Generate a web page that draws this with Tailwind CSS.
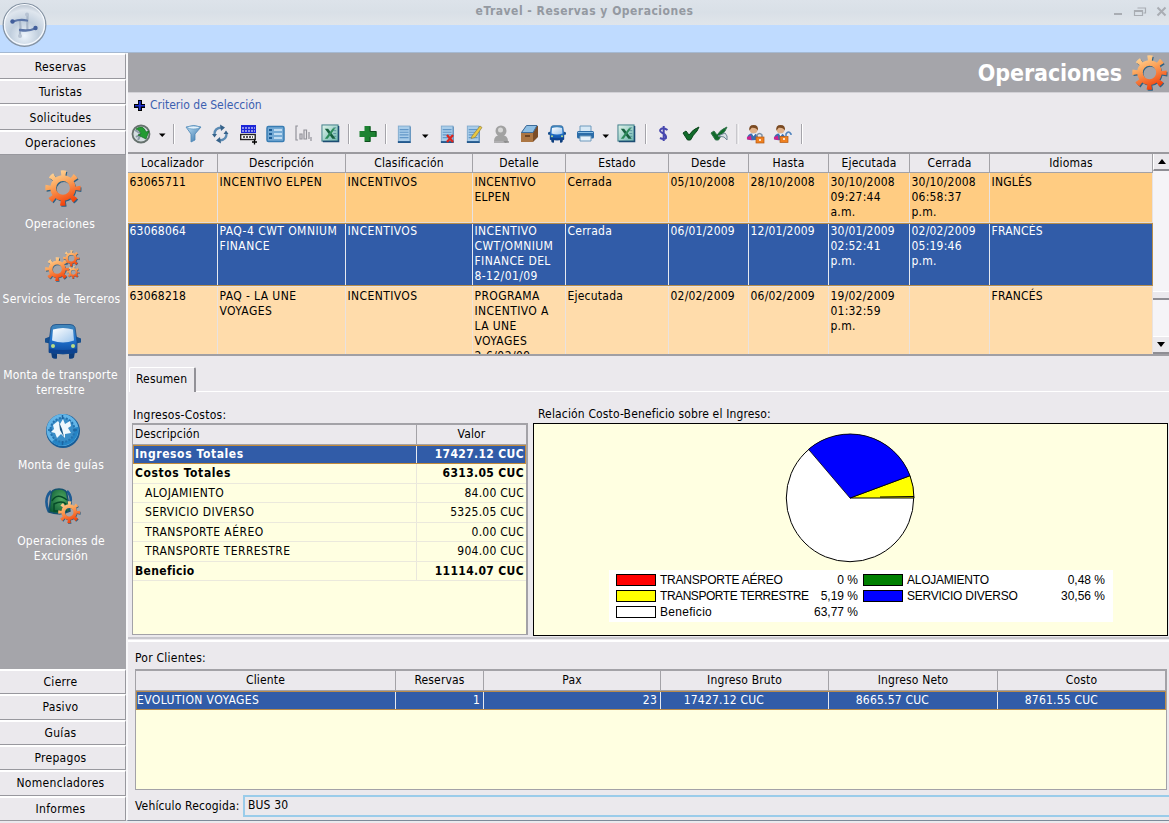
<!DOCTYPE html>
<html lang="es">
<head>
<meta charset="utf-8">
<title>eTravel - Reservas y Operaciones</title>
<script src="https://cdn.jsdelivr.net/npm/@tailwindcss/browser@4"></script>
</head>
<body class="w-[1169px] h-[823px] overflow-hidden bg-[#ebe9ed] text-black text-[12px] leading-[15px] font-['DejaVu_Sans_Condensed','DejaVu_Sans',sans-serif] [font-stretch:condensed] tracking-[0.15px]">
<svg class="absolute w-0 h-0" aria-hidden="true">
  <defs>
    <linearGradient id="gO" gradientUnits="userSpaceOnUse" x1="8" y1="0" x2="22" y2="34"><stop offset="0" stop-color="#ffdca0"/><stop offset=".4" stop-color="#fba55c"/><stop offset="1" stop-color="#f23c06"/></linearGradient>
    <linearGradient id="gB" x1="0" y1="0" x2="1" y2="1"><stop offset="0" stop-color="#c5e4f8"/><stop offset="1" stop-color="#2c6da6"/></linearGradient>
    <linearGradient id="gBus" x1="0" y1="0" x2="0" y2="1"><stop offset="0" stop-color="#4387b8"/><stop offset=".5" stop-color="#2274cf"/><stop offset="1" stop-color="#0b479c"/></linearGradient>
    <linearGradient id="gW" x1="0" y1="0" x2="1" y2="1"><stop offset="0" stop-color="#ffffff"/><stop offset="1" stop-color="#9fc6ec"/></linearGradient>
    <linearGradient id="gX" x1="0" y1="0" x2="1" y2="1"><stop offset="0" stop-color="#dff3ea"/><stop offset="1" stop-color="#6fb7b0"/></linearGradient>
    <radialGradient id="gOrb" cx=".5" cy=".75" r=".75"><stop offset="0" stop-color="#eef5fc"/><stop offset=".45" stop-color="#c0cedd"/><stop offset=".8" stop-color="#dfe6ee"/><stop offset="1" stop-color="#b4bfcc"/></radialGradient>
    <radialGradient id="gG" cx=".6" cy=".4" r=".7"><stop offset="0" stop-color="#4fa860"/><stop offset="1" stop-color="#0b5a34"/></radialGradient>
    <symbol id="gear" viewBox="0 0 36 36">
      <g fill="none" stroke="#2b6185" transform="translate(1 1.2)"><circle cx="17.5" cy="17.5" r="9.5" stroke-width="5"/><circle cx="17.5" cy="17.5" r="14" stroke-width="6" stroke-dasharray="4.6 6.395" stroke-dashoffset="2.3"/></g>
      <g fill="none" stroke="url(#gO)"><circle cx="17.5" cy="17.5" r="9.5" stroke-width="5.6"/><circle cx="17.5" cy="17.5" r="14" stroke-width="6.4" stroke-dasharray="4.6 6.395" stroke-dashoffset="2.3"/></g>
    </symbol>
    <symbol id="bus" viewBox="0 0 36 36">
      <path d="M6 28h6v7q-3 1-5-1zM24 28h6l-1 6q-2 2-5 1z" fill="#0d3d7c"/>
      <path d="M5 13L0 15v4l5 1zM31 13l5 2v4l-5 1z" fill="#174f8e"/>
      <path d="M6 4Q7 1 11 1h14q4 0 5 3l2 14v11q-14 3-28 0V18z" fill="url(#gBus)" stroke="#154a86" stroke-width=".8"/>
      <path d="M8 6q10-3 20 0l1 11q-11 4-22 0z" fill="url(#gW)"/>
      <path d="M4 25q14 3 28 0v4q-14 2-28 0z" fill="#0d4390"/><circle cx="8" cy="22.500" r="2" fill="#b7dc87"/><circle cx="28" cy="22.500" r="2" fill="#b7dc87"/>
    </symbol>
    <symbol id="excel" viewBox="0 0 20 20">
      <rect x="1" y="1" width="17" height="17" fill="url(#gX)" stroke="#3c7c86"/><path d="M18.500 2v16.500H2" fill="none" stroke="#1d4d73" stroke-width="1.500"/>
      <path d="M13 4h3M13 7h3M13 10h3M13 13h3" stroke="#5b97a0"/>
      <path d="M4 5h3.500l8 10.500H12z" fill="#17603f"/><path d="M15 4.500h-2.500L4 15.500h3z" fill="#2c8a5a"/>
    </symbol>
    <symbol id="doc" viewBox="0 0 18 20">
      <rect x="1.500" y=".5" width="13" height="18" fill="#a9cdea" stroke="#7fa9cc"/><path d="M3 4.500h10M3 7.500h10M3 10.500h10M3 13.500h10" stroke="#6297c8" stroke-width="1.300"/><path d="M1 18.500h14.500" stroke="#1b5288" stroke-width="2"/><path d="M15 1v17" stroke="#4b83b5"/>
    </symbol>
    <symbol id="user" viewBox="0 0 20 20">
      <circle cx="8" cy="6" r="4" fill="#e2b38b"/><path d="M3.500 7Q2.500 1 8 1t4.500 6Q11 3.500 6 4z" fill="#7a4a22"/>
      <path d="M1 16q0-6 6-6 6 0 6 6-6 2-12 0z" fill="#3c6fb0"/><path d="M1 14l4-2 1 5-5-1z" fill="#d0208c"/><path d="M6 10l2 3 2-3z" fill="#fff"/>
    </symbol>
    <symbol id="caret" viewBox="0 0 8 5"><path d="M.5.500h6.500L3.750 4z" fill="#000"/></symbol>
  </defs>
</svg>

<div class="flex flex-col w-full h-full">
  <header class="relative h-[53px] shrink-0">
    <div class="h-[25px] bg-linear-to-b from-[#dde3ea] via-[#d9e0e7] to-[#e0e5ea] flex items-center text-[#9499a1] font-bold">
      <div class="w-[1169px] text-center pb-[2px] tracking-[0.5px]">eTravel - Reservas y Operaciones</div>
    </div>
    <div class="h-[28px] bg-[#bfdbff] border-b border-[#a5b9d2]"></div>
    <svg class="absolute left-[1112px] top-[4px]" width="57" height="16" fill="none" stroke="#a9adb3"><path d="M2 10h8" stroke-width="2"/><path d="M25.500 4h8v5h-2M22.500 6.500h8v5h-8z M22.500 7.500h8" stroke-width="1.200"/><path d="M45.500 3.500l8 8M53.500 3.500l-8 8" stroke-width="2"/></svg>
    <svg class="absolute left-[1px] top-[2px]" width="48" height="48"><circle cx="23.500" cy="23" r="21.300" fill="url(#gOrb)" stroke="#8593a3" stroke-width="1.300"/><circle cx="23.500" cy="22.500" r="20" fill="none" stroke="#f8fbff" stroke-width="1.200"/><g fill="none" stroke-linecap="round"><path d="M26.500 13v5q-.5 4 0 10M19 33.500v-4q1-4 0-10" stroke="#a9b7c9" stroke-width="2.200"/><path d="M12 19.500q7-2.500 14-1M34 26.500q-6 3-15 1.500" stroke="#5c76a8" stroke-width="2.300"/></g><g fill="#425f9c"><circle cx="11.500" cy="19.500" r="2.200"/><circle cx="34.500" cy="26" r="2.200"/></g><g fill="#b7c3d3"><circle cx="26" cy="12.500" r="2"/><circle cx="19" cy="34" r="2"/></g></svg>
  </header>

  <div class="flex flex-1 min-h-0">
    <nav class="w-[126px] shrink-0 h-[768px] flex flex-col bg-[#a5a5aa] text-center tracking-[0.3px]">
      <div class="grid grid-rows-4 h-[102px] shrink-0 *:bg-[#ebe9ed] *:border-t-2 *:border-t-white *:border-b *:border-b-[#98989e] *:border-r *:border-r-[#98989e] *:flex *:items-center *:justify-center *:pr-[4px] *:pt-[2px]">
        <div>Reservas</div>
        <div>Turistas</div>
        <div>Solicitudes</div>
        <div>Operaciones</div>
      </div>
      <div class="flex-1 flex flex-col items-center text-white pt-[15px] pr-[6px] tracking-[0.22px] whitespace-nowrap">
        <svg class="ml-[6px]" width="37" height="37"><use href="#gear"/></svg>
        <div class="mt-[10px]">Operaciones</div>
        <svg class="mt-[18px] ml-[6px]" width="37" height="34"><use href="#gear" x="18" y="0" width="17" height="17"/><use href="#gear" x="0" y="7" width="25" height="25"/><use href="#gear" x="22" y="16" width="13" height="13"/></svg>
        <div class="mt-[8px] ml-[3px]">Servicios de Terceros</div>
        <svg class="mt-[16px] ml-[6px]" width="36" height="37"><use href="#bus"/></svg>
        <div class="mt-[8px] ml-[1px]">Monta de transporte<br>terrestre</div>
        <svg class="mt-[15px] ml-[6px]" width="36" height="36"><circle cx="18" cy="18" r="17" fill="#175d98"/><circle cx="17.500" cy="17" r="16" fill="#64b5e7"/><path d="M33 14a16 16 0 0 1-26 15L17.500 17z" fill="#2584c5"/><circle cx="17.500" cy="17" r="12" fill="#3a8ec8" stroke="#2473b0" stroke-width="2" stroke-dasharray="2 1.500"/><path d="M8 12l5-4 2 3 3-5 2 5 5-3 1 5-3 2 3 5-6 1v4l-4-4-4 4-2-5-4-1 3-3z" fill="#eff8fd"/><path d="M14 9l3 7 2 8-4-7z" fill="#195787"/><path d="M17.500 2v4M17.500 28v4M3 17h4M28 17h4" stroke="#1c64a0" stroke-width="1.500"/></svg>
        <div class="mt-[9px] ml-[2px]">Monta de guías</div>
        <svg class="mt-[15px] ml-[6px]" width="37" height="37"><path d="M6 3q-8 8-2 21M22 3q7 7 1 18" fill="none" stroke="#1d5b94" stroke-width="2.600"/><path d="M6 7q0-6 8-6t8 6l3 16q-10 5-21 1z" fill="url(#gG)" stroke="#14506f" stroke-width="1.500"/><path d="M7 13q5-9 15-1M9 23v-7q8-4 12 0v7z" fill="none" stroke="#064b29" stroke-width="1.500"/><use href="#gear" x="13" y="13" width="23" height="23"/></svg>
        <div class="mt-[9px] ml-[2px]">Operaciones de<br>Excursión</div>
      </div>
      <div class="grid grid-rows-6 h-[152px] shrink-0 *:bg-[#ebe9ed] *:border-t-2 *:border-t-white *:border-b *:border-b-[#98989e] *:border-r *:border-r-[#98989e] *:flex *:items-center *:justify-center *:pr-[4px] *:pt-[1px]">
        <div>Cierre</div>
        <div>Pasivo</div>
        <div>Guías</div>
        <div>Prepagos</div>
        <div>Nomencladores</div>
        <div>Informes</div>
      </div>
    </nav>

    <main class="w-[1043px] h-[768px] border-l-2 border-l-[#f8f8fa] border-b border-b-[#7d8a99] flex flex-col">
      <div class="h-[39px] shrink-0 bg-[#a5a5aa] flex items-center justify-end pr-[1px] text-white font-bold">
        <span class="text-[23px] leading-[30px] tracking-[-0.1px] mr-[10px]">Operaciones</span>
        <svg width="36" height="36"><use href="#gear"/></svg>
      </div>
      <div class="h-[26px] shrink-0 border-t border-[#d2d1d6] flex items-center pl-[6px] text-[#3c60b0] tracking-[0px]">
        <svg width="11" height="11"><path d="M4 0h4v4h3v4H8v3H4V8H0V4h4z" fill="#000"/><path d="M4.800 1h2v4h4v1.500h-4V10h-2V6.500H1V5h3.800z" fill="#1c2fd0"/></svg>
        <span class="ml-[5px]">Criterio de Selección</span>
      </div>

      <div class="h-[34px] shrink-0">
        <svg width="700" height="34" viewBox="128 118 700 34">
          <circle cx="141" cy="134" r="8.500" fill="#d4dde0" stroke="#66716d" stroke-width="1.800"/><path d="M135 130l6 4-3 6M136 137l5-3" stroke="#8c9aa8" stroke-width="2" fill="none"/><path d="M136 129q7-5 10 3l3-1-3 8-8-4 3-1q-1-4-5-5z" fill="#239b32" stroke="#136820" stroke-width=".7"/>
          <use href="#caret" x="158.500" y="133" width="8" height="5"/>
          <path d="M173.500 124v20M348.500 124v20M385.500 124v20M645.500 124v20M737 124v20M801.500 124v20" stroke="#a5a4aa"/><path d="M174.500 124v20M349.500 124v20M386.500 124v20M646.500 124v20M738 124v20M802.500 124v20" stroke="#fff"/>
          <path d="M186 127q8-3 15 0l-6 7v6l-4 2v-8z" fill="url(#gB)" stroke="#4b85b5" stroke-width=".8"/><ellipse cx="193.500" cy="127.500" rx="6" ry="1.500" fill="#e4f2fb" stroke="#5b92be" stroke-width=".6"/>
          <g fill="none" stroke="#5c8bb4" stroke-width="2.300"><path d="M214.500 134q0-6 7-6.500M226.500 134q0 6-7 6.500"/></g><path d="M220 124.500l5 3-4 3.500zM221 143.500l-5-3 4-3.500zM223.500 134h5l-2.500-3.500zM212 134h5l-2.500 3.500z" fill="#36628a"/>
          <g><rect x="241" y="125" width="15" height="8" fill="#1b25d8"/><path d="M242 128h13M242 131h13" stroke="#fff" stroke-dasharray="2 1"/><rect x="240.700" y="134.500" width="14.500" height="5" fill="#fff" stroke="#222" stroke-width="1.400"/><path d="M243 137h10" stroke="#222" stroke-width="1.300" stroke-dasharray="2 1"/><path d="M252 142h5M254.500 139.500v5" stroke="#000" stroke-width="1.300"/></g>
          <g><rect x="267" y="126.500" width="17" height="15" rx="1.500" fill="#74aad5" stroke="#387cb3" stroke-width="1.500"/><path d="M269 130h3M269 134h3M269 138h3" stroke="#1c5d97" stroke-width="2"/><path d="M274 130h8M274 134h8M274 138h8" stroke="#d8ebfa" stroke-width="1.500"/></g>
          <path d="M298 126h-2v14h2M300 139v-5h2v5zM304 139v-9h2.500v9zM309 139v-7M311 137v4" fill="none" stroke="#929299" stroke-width="1.200"/>
          <use href="#excel" x="321" y="124" width="19" height="19"/>
          <path d="M364.500 126h6v5h6v6h-6v5h-6v-5h-5v-6h5z" fill="#1d8232"/><path d="M370 126.500v5h6v5M370 137v4.500h-5" stroke="#0e4c1d" fill="none"/>
          <use href="#doc" x="397" y="125" width="16" height="19"/><use href="#caret" x="421.500" y="134" width="8" height="5"/>
          <use href="#doc" x="440" y="125" width="16" height="19"/><path d="M447 135l6 7M453 135l-6 7" stroke="#d82620" stroke-width="2.400"/>
          <use href="#doc" x="466" y="125" width="16" height="19"/><path d="M472 136l8-10 2 1.500-7 10-4 1z" fill="#e8c842" stroke="#87753a" stroke-width=".6"/>
          <g fill="#a2a2a2"><circle cx="501" cy="131" r="5.500"/><path d="M494 141q0-6 7-6t7 6zM500 137l9 5-4 1z"/></g><circle cx="500.500" cy="130" r="2.500" fill="#d8d8d8"/><path d="M494 142h15" stroke="#777"/>
          <path d="M521 133l5-7h12v11l-5 5h-12z" fill="#7b4d28"/><path d="M521.500 132.500l5-7h10.500l-4 7z" fill="#8fbfe4" stroke="#3d6d9c"/><path d="M521 133h12v9h-12z" fill="#ac7643"/><path d="M525 136h5" stroke="#573518" stroke-width="1.500"/>
          <use href="#bus" x="548" y="124" width="18" height="20"/>
          <path d="M580 126h11v6h-11z" fill="#d6e8f5" stroke="#6e9abd"/><rect x="577" y="131" width="17" height="7.500" rx="1.500" fill="#2b6ca8"/><path d="M578 132.500h15" stroke="#8cc0e5"/><path d="M580 136h11v5h-11z" fill="#e7f1f9" stroke="#6e9abd"/>
          <use href="#caret" x="602" y="134" width="8" height="5"/>
          <use href="#excel" x="617" y="124" width="19" height="19"/>
          <path d="M667.500 130q-4-3-6.500-1t1.500 4 3.500 5q-2 2-6 0M663.700 126v15" fill="none" stroke="#4646ae" stroke-width="2"/>
          <path d="M683 133l3-2 3 4q4-6 10-8l-2 4q-4 4-6.500 9h-3z" fill="#116b2b" stroke="#0c451c"/>
          <path d="M711 133l3-2 3 4q4-6 10-8l-2 4q-4 4-6.500 9h-3z" fill="#116b2b" stroke="#35754e"/><path d="M718 136l7-3 2 3v4l-3-3z" fill="#d8e0e4" stroke="#708696"/>
          <use href="#user" x="746" y="124" width="19" height="19"/><path d="M757 137v-2q2.500-3 5 0v2" fill="none" stroke="#7d91a5" stroke-width="1.500"/><rect x="756" y="137" width="8" height="6" fill="#ef8020" stroke="#b35a14" stroke-width=".7"/><path d="M760 139v2" stroke="#fff" stroke-width="1.500"/>
          <use href="#user" x="773" y="124" width="19" height="19"/><path d="M786 136v-2q2.500-4 5 0v1" fill="none" stroke="#4f83bd" stroke-width="1.500"/><rect x="780" y="136.500" width="8" height="6" fill="#ef8020" stroke="#b35a14" stroke-width=".7"/><path d="M784 138v2" stroke="#fff" stroke-width="1.500"/>
        </svg>
      </div>

      <!-- Operaciones -->
      <section class="h-[204px] shrink-0 border-t-2 border-t-[#9b9a9f] border-b-2 border-b-[#a09fa4] flex overflow-hidden">
        <div class="w-[1025px] shrink-0 flex flex-col overflow-hidden">
          <div class="grid grid-cols-[90px_128px_127px_93px_103px_80px_80px_81px_80px_163px] h-[19px] shrink-0 text-center border-b border-[#a3a2a7] *:border-r *:border-[#a3a2a7] *:pt-[2px]">
            <div>Localizador</div><div>Descripción</div><div>Clasificación</div><div>Detalle</div><div>Estado</div><div>Desde</div><div>Hasta</div><div>Ejecutada</div><div>Cerrada</div><div>Idiomas</div>
          </div>
          <div class="grid grid-cols-[90px_128px_127px_93px_103px_80px_80px_81px_80px_163px] h-[50px] shrink-0 bg-[#ffcc82] border-b border-[#e7dcd3] *:border-r *:border-[#e6e2e4] *:pl-[1.500px] *:pt-[2px] *:whitespace-nowrap tracking-[0.22px]">
            <div>63065711</div><div class="tracking-[0.4px]">INCENTIVO ELPEN</div><div class="tracking-[0.4px]">INCENTIVOS</div><div class="tracking-[0.25px]">INCENTIVO<br>ELPEN</div><div>Cerrada</div><div>05/10/2008</div><div>28/10/2008</div><div>30/10/2008<br>09:27:44<br>a.m.</div><div>30/10/2008<br>06:58:37<br>p.m.</div><div>INGLÉS</div>
          </div>
          <div class="grid grid-cols-[90px_128px_127px_93px_103px_80px_80px_81px_80px_163px] h-[63px] shrink-0 bg-[#315ca8] text-white outline -outline-offset-1 outline-[#b78e4c] *:border-r *:border-[#e6e9f0] *:pl-[1.500px] *:pt-[1px] *:whitespace-nowrap tracking-[0.22px]">
            <div>63068064</div><div class="tracking-[0.45px]">PAQ-4 CWT OMNIUM<br>FINANCE</div><div class="tracking-[0.4px]">INCENTIVOS</div><div class="tracking-[0.4px]">INCENTIVO<br>CWT/OMNIUM<br>FINANCE DEL<br>8-12/01/09</div><div>Cerrada</div><div>06/01/2009</div><div>12/01/2009</div><div>30/01/2009<br>02:52:41<br>p.m.</div><div>02/02/2009<br>05:19:46<br>p.m.</div><div>FRANCÉS</div>
          </div>
          <div class="grid grid-cols-[90px_128px_127px_93px_103px_80px_80px_81px_80px_163px] h-[80px] shrink-0 bg-[#ffdcab] *:border-r *:border-[#e9e2df] *:pl-[1.500px] *:pt-[2px] *:whitespace-nowrap border-t border-[#e9e2df] tracking-[0.22px]">
            <div>63068218</div><div class="tracking-[0.4px]">PAQ - LA UNE<br>VOYAGES</div><div class="tracking-[0.4px]">INCENTIVOS</div><div class="tracking-[0.4px]">PROGRAMA<br>INCENTIVO A<br>LA UNE<br>VOYAGES<br>2-6/02/09</div><div>Ejecutada</div><div>02/02/2009</div><div>06/02/2009</div><div>19/02/2009<br>01:32:59<br>p.m.</div><div></div><div>FRANCÉS</div>
          </div>
        </div>
        <div class="w-[16px] flex flex-col bg-[#f5f4f7]">
          <div class="h-[17px] bg-[#ebe9ed] border-l border-white border-b-2 border-b-[#8f8e94] flex items-center justify-center"><svg width="8" height="5"><path d="M0 5h8L4 0z" fill="#000"/></svg></div>
          <div class="flex-1"></div>
          <div class="h-[9px] bg-[#ebe9ed] border-t border-white border-b-2 border-b-[#8f8e94]"></div>
          <div class="h-[36px]"></div>
          <div class="h-[18px] bg-[#ebe9ed] border-t border-white border-b-2 border-b-[#8f8e94] flex items-center justify-center"><svg width="8" height="5"><path d="M0 0h8L4 5z" fill="#000"/></svg></div>
        </div>
      </section>

      <div class="h-[36px] shrink-0 flex items-end pl-[1px]">
        <div class="w-[67px] h-[25px] border-t border-l border-white border-r-2 border-r-[#929197] rounded-t-xs pl-[6px] pt-[4px]">Resumen</div>
        <div class="flex-1 border-b border-white"></div>
      </div>

      <div class="flex h-[244px] shrink-0 pl-[4px] pt-[14px]">
        <section class="w-[396px]">
          <div class="h-[17px] pt-[2px] pl-[1px] tracking-[0.25px]">Ingresos-Costos:</div>
          <div class="h-[212px] bg-[#ffffe1] border-2 border-[#a3a2a7] border-b-1 border-l-1 *:grid *:grid-cols-[284px_1fr] *:h-[19.500px]">
            <div class="bg-[#ebe9ed] border-b border-[#a3a2a7]"><div class="pl-[2px] pt-[2px] border-r border-[#a3a2a7]">Descripción</div><div class="text-center pt-[2px]">Valor</div></div>
            <div class="bg-[#315ca8] text-white font-bold outline -outline-offset-1 outline-[#c28a3a]"><div class="pl-[2px] pt-[2px] border-r border-[#e6e9f0] tracking-[0.6px]">Ingresos Totales</div><div class="text-right pr-[2px] pt-[2px] tracking-[0.35px]">17427.12 CUC</div></div>
            <div class="border-b border-[#ebe9dc] font-bold"><div class="pl-[2px] pt-[2px] border-r border-[#e9e7dc] tracking-[0.6px]">Costos Totales</div><div class="text-right pr-[2px] pt-[2px] tracking-[0.35px]">6313.05 CUC</div></div>
            <div class="border-b border-[#ebe9dc]"><div class="pl-[12px] pt-[2px] border-r border-[#e9e7dc] tracking-[0.45px]">ALOJAMIENTO</div><div class="text-right pr-[2px] pt-[2px] tracking-[0.25px]">84.00 CUC</div></div>
            <div class="border-b border-[#ebe9dc]"><div class="pl-[12px] pt-[2px] border-r border-[#e9e7dc] tracking-[0.45px]">SERVICIO DIVERSO</div><div class="text-right pr-[2px] pt-[2px] tracking-[0.25px]">5325.05 CUC</div></div>
            <div class="border-b border-[#ebe9dc]"><div class="pl-[12px] pt-[2px] border-r border-[#e9e7dc] tracking-[0.45px]">TRANSPORTE AÉREO</div><div class="text-right pr-[2px] pt-[2px] tracking-[0.25px]">0.00 CUC</div></div>
            <div class="border-b border-[#ebe9dc]"><div class="pl-[12px] pt-[2px] border-r border-[#e9e7dc] tracking-[0.4px]">TRANSPORTE TERRESTRE</div><div class="text-right pr-[2px] pt-[2px] tracking-[0.25px]">904.00 CUC</div></div>
            <div class="border-b border-[#ebe9dc] font-bold"><div class="pl-[2px] pt-[2px] border-r border-[#e9e7dc] tracking-[0.35px]">Beneficio</div><div class="text-right pr-[2px] pt-[2px] tracking-[0.35px]">11114.07 CUC</div></div>
          </div>
        </section>
        <section class="ml-[5px] w-[635px]">
          <div class="h-[17px] pt-[1px] pl-[5px]">Relación Costo-Beneficio sobre el Ingreso:</div>
          <div class="h-[213px] bg-[#ffffe1] border-[1.500px] border-black flex flex-col items-center">
            <svg class="mt-[9px] mr-[2px] shrink-0" width="130" height="130" viewBox="-65 -65 130 130"><circle r="63.700" fill="#fff" stroke="#000"/><path d="M0 0L60-22.300A64 64 0 0 1 64 0z" fill="#ff0" stroke="#000"/><path d="M0 0L-41.500-48.700A64 64 0 0 1 60-22.300z" fill="#00f" stroke="#000" stroke-width=".8"/><path d="M30-1L64-1.500" stroke="#000"/></svg>
            <div class="mt-[7px] ml-[21px] w-[504px] h-[52px] bg-white pl-[7px] pt-[2px] pr-[9px] grid grid-cols-[44px_148px_50px_5px_44px_148px_50px] grid-rows-[16px_16px_16px] items-center font-['Liberation_Sans',Arial,sans-serif] text-[12px] tracking-[-0.25px] whitespace-nowrap">
              <i class="block w-[40px] h-[12px] border border-black bg-[#f00]"></i><span>TRANSPORTE AÉREO</span><span class="text-right tracking-[0px]">0 %</span><b></b><i class="block w-[40px] h-[12px] border border-black bg-[#008000]"></i><span>ALOJAMIENTO</span><span class="text-right tracking-[0px]">0,48 %</span>
              <i class="block w-[40px] h-[12px] border border-black bg-[#ff0]"></i><span class="tracking-[-0.45px]">TRANSPORTE TERRESTRE</span><span class="text-right tracking-[0px]">5,19 %</span><b></b><i class="block w-[40px] h-[12px] border border-black bg-[#00f]"></i><span>SERVICIO DIVERSO</span><span class="text-right tracking-[0px]">30,56 %</span>
              <i class="block w-[40px] h-[12px] border border-black bg-white"></i><span class="tracking-[0.3px]">Beneficio</span><span class="text-right tracking-[0px]">63,77 %</span>
            </div>
          </div>
        </section>
      </div>

      <div class="h-[5px] shrink-0 border-t-2 border-t-[#c9c8ce] border-b-2 border-b-white mt-[1px]"></div>
      <section class="pl-[7px] pr-[2px] pt-[9px]">
        <div class="h-[18px] tracking-[0.25px]">Por Clientes:</div>
        <div class="h-[121px] bg-[#ffffe1] border-t-2 border-x border-b border-[#a3a2a7]">
          <div class="grid grid-cols-[260px_88px_177px_168px_169px_1fr] h-[19.500px] bg-[#ebe9ed] border-b border-[#a3a2a7] text-center *:pt-[2px] *:border-r *:border-[#a3a2a7]"><div>Cliente</div><div>Reservas</div><div>Pax</div><div>Ingreso Bruto</div><div>Ingreso Neto</div><div>Costo</div></div>
          <div class="grid grid-cols-[260px_88px_177px_168px_169px_1fr] h-[19px] bg-[#315ca8] text-white *:pt-[2px] *:border-r *:border-[#e6e9f0] outline -outline-offset-1 outline-[#b98b4a] tracking-[0.2px]"><div class="pl-[1px] tracking-[0.4px]">EVOLUTION VOYAGES</div><div class="text-right pr-[3px]">1</div><div class="text-right pr-[3px]">23</div><div class="text-right pr-[64px]">17427.12 CUC</div><div class="text-right pr-[68px]">8665.57 CUC</div><div class="text-right pr-[67px]">8761.55 CUC</div></div>
        </div>
      </section>
      <div class="flex items-center mt-[5px] pl-[7px] h-[22px]"><div class="w-[108px]">Vehículo Recogida:</div><div class="flex-1 h-[22px] border-2 border-r-0 border-[#9accea] pl-[3px] pt-[1px]">BUS 30</div></div>
    </main>
  </div>
</div>
</body>
</html>
